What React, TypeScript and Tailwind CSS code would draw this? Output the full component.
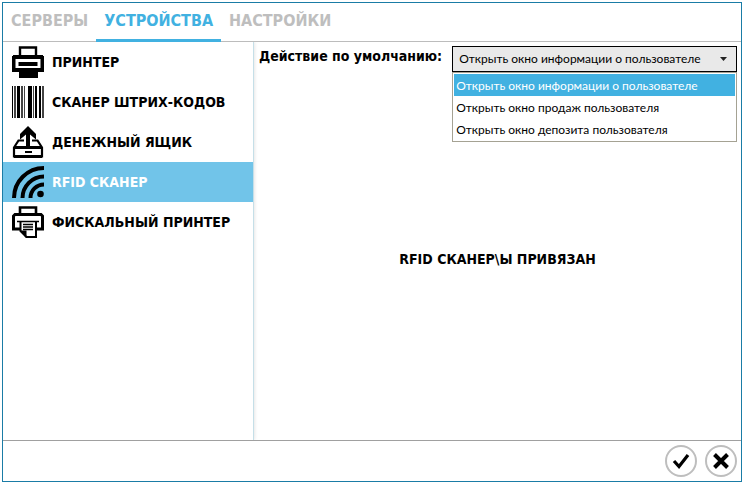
import { useState } from "react";
import type { ReactNode } from "react";

function PrinterIcon() {
  return (
    <svg viewBox="0 0 32 32" className="size-8 shrink-0" aria-hidden="true">
      <path d="M8 10V1.500h16V10" fill="none" stroke="#000" strokeWidth="2.400" />
      <path d="M1 9h30v1h1v16h-6v6H7v-6H0V10h1z" fill="#000" />
      <path d="M3.500 13h25v9h-25z" fill="#fff" />
      <path d="M6.500 16h19v4h-19z" fill="#000" />
    </svg>
  );
}

function BarcodeIcon() {
  return (
    <svg viewBox="0 0 32 32" className="size-8 shrink-0" shapeRendering="crispEdges" aria-hidden="true">
      <path d="M0 0h1v32H0zM5 0h3v32H5zM16 0h4v32h-4zM23 0h2v32h-2zM27 0h2v32h-2z" fill="#000" />
      <path d="M2 0h2v32H2zM9 0h2v32H9zM12 0h1v32h-1zM21 0h1v32h-1zM30 0h2v32h-2z" fill="#444" />
    </svg>
  );
}

function DrawerIcon() {
  return (
    <svg viewBox="0 0 32 32" className="size-8 shrink-0" aria-hidden="true">
      <path d="M14 20V8.500l-6 5V8l8-8 8 8v5.500l-6-5V20z" fill="#000" />
      <path d="M12 14.500H6.500L2 21.500V30.500h28V21.500l-4.500-7H20" fill="none" stroke="#000" strokeWidth="2.200" />
      <path d="M2 21.500h28M2 30.500h28" stroke="#000" strokeWidth="3" />
      <path d="M13 26h7" stroke="#000" strokeWidth="2" />
    </svg>
  );
}

function RfidIcon() {
  return (
    <svg viewBox="0 0 32 32" className="size-8 shrink-0" aria-hidden="true">
      <g fill="none" stroke="#000" strokeWidth="4">
        <path d="M2 32A30 30 0 0 1 32 2" />
        <path d="M10.500 32A21.500 21.500 0 0 1 32 10.500" />
        <path d="M18.500 32A13.500 13.500 0 0 1 32 18.500" />
      </g>
      <circle cx="28.500" cy="28" r="3.300" fill="#000" />
    </svg>
  );
}

function FiscalPrinterIcon() {
  return (
    <svg viewBox="0 0 32 32" className="size-8 shrink-0" aria-hidden="true">
      <g fill="none" stroke="#000">
        <path d="M8 8V1.500h16V8" strokeWidth="2.600" />
        <path d="M8 23H1.500V10L3 8.500h26l1.500 1.500v13H24" strokeWidth="3" />
        <path d="M8.500 16v9l6 6h9.500V16" strokeWidth="2" />
        <path d="M5 15.500h22M11 18.500h10M11 21h10M11 23.500h10" strokeWidth="1.400" />
      </g>
      <path d="M8 24.500h6.500V32H14z" fill="#000" />
    </svg>
  );
}

const tabs = ["СЕРВЕРЫ", "УСТРОЙСТВА", "НАСТРОЙКИ"];

const devices: { name: string; icon: ReactNode }[] = [
  { name: "ПРИНТЕР", icon: <PrinterIcon /> },
  { name: "СКАНЕР ШТРИХ-КОДОВ", icon: <BarcodeIcon /> },
  { name: "ДЕНЕЖНЫЙ ЯЩИК", icon: <DrawerIcon /> },
  { name: "RFID СКАНЕР", icon: <RfidIcon /> },
  { name: "ФИСКАЛЬНЫЙ ПРИНТЕР", icon: <FiscalPrinterIcon /> },
];

const actions = [
  "Открыть окно информации о пользователе",
  "Открыть окно продаж пользователя",
  "Открыть окно депозита пользователя",
];

export default function App() {
  const [tab, setTab] = useState(1);
  const [device, setDevice] = useState(3);
  const [action, setAction] = useState(0);

  return (
    <div className="flex min-h-screen flex-col bg-white pt-0.5 pl-0.5 font-['DejaVu_Sans_Condensed','Noto_Sans',sans-serif] text-black">
      <div className="flex flex-1 flex-col border border-[#1a7ca6]">
        <nav className="flex h-[39px] border-b border-[#bcbcbc]">
          {tabs.map((name, i) => (
            <button
              key={name}
              type="button"
              onClick={() => setTab(i)}
              className={`-mb-px border-b-[3px] px-2 text-base font-bold ${
                i === tab ? "border-[#41b1e1] text-[#41b1e1]" : "border-transparent text-[#bebebe]"
              }`}
            >
              {name}
            </button>
          ))}
        </nav>

        <div className="flex flex-1">
          <aside className="w-[251px] shrink-0 border-r border-[#c5dfe8] shadow-[0_0_4px_rgba(0,0,0,0.15)] [clip-path:inset(0_-6px_0_0)]">
            {devices.map(({ name, icon }, i) => (
              <button
                key={name}
                type="button"
                onClick={() => setDevice(i)}
                className={`flex h-10 w-full items-center gap-2 pl-[9px] text-left text-sm font-bold ${
                  i === device ? "bg-[#71c4e9] text-white" : ""
                }`}
              >
                {icon}
                {name}
              </button>
            ))}
          </aside>

          <main className="flex min-w-0 flex-1 flex-col">
            <div className="flex items-start gap-2.5 pt-1 pr-1 pb-1.5 pl-[5px]">
              <label htmlFor="action" className="shrink-0 text-sm leading-5 font-bold">
                Действие по умолчанию:
              </label>
              <div className="relative min-w-0 flex-1 font-['Lato','Open_Sans',sans-serif] text-xs">
                <select
                  id="action"
                  value={action}
                  onChange={(e) => setAction(Number(e.target.value))}
                  className="block h-[26px] w-full appearance-none border border-black bg-[#e9e9e9] pr-6 pl-1.5"
                >
                  {actions.map((name, i) => (
                    <option key={name} value={i}>
                      {name}
                    </option>
                  ))}
                </select>
                <svg viewBox="0 0 7 4" className="pointer-events-none absolute top-[11px] right-2.5 h-1 w-[7px]" aria-hidden="true">
                  <path d="M0 0h7L3.500 4z" fill="#222" />
                </svg>
                <ul role="listbox" className="absolute top-full right-0 left-0 border border-[#a5a293] bg-white p-px">
                  {actions.map((name, i) => (
                    <li
                      key={name}
                      role="option"
                      aria-selected={i === action}
                      onClick={() => setAction(i)}
                      className={`h-[22px] truncate px-0.5 leading-6 ${i === action ? "bg-[#41b1e1] text-white" : ""}`}
                    >
                      {name}
                    </li>
                  ))}
                </ul>
              </div>
            </div>
            <p className="flex flex-1 items-center justify-center text-sm font-bold">RFID СКАНЕР\Ы ПРИВЯЗАН</p>
          </main>
        </div>

        <footer className="flex h-[41px] items-center justify-end gap-2 border-t border-[#a0a0a0] px-1">
          <button type="button" aria-label="OK" className="size-8 rounded-full border-2 border-[#bebebe]">
            <svg viewBox="0 0 28 28" className="size-7" aria-hidden="true">
              <path d="M7 14l5 5.500L21 8" fill="none" stroke="#000" strokeWidth="3.200" />
            </svg>
          </button>
          <button type="button" aria-label="Отмена" className="size-8 rounded-full border-2 border-[#bebebe]">
            <svg viewBox="0 0 28 28" className="size-7" aria-hidden="true">
              <path d="M7.500 7.500l13 13M20.500 7.500l-13 13" fill="none" stroke="#000" strokeWidth="4" />
            </svg>
          </button>
        </footer>
      </div>
    </div>
  );
}
